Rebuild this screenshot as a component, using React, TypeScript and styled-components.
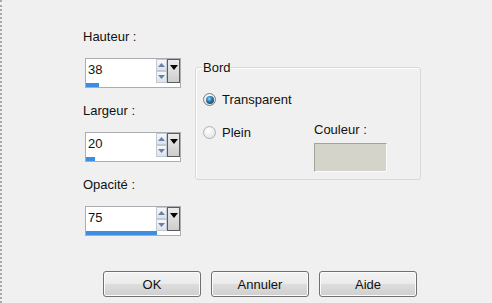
import React from "react";
import styled, { createGlobalStyle } from "styled-components";

const GlobalStyle = createGlobalStyle`
  html, body { margin: 0; padding: 0; background: #f0f0f0; }
  body { font-family: "Liberation Sans", Arial, sans-serif; font-size: 13px; color: #111; }
`;

const Page = styled.div`
  width: 492px;
  height: 303px;
  box-sizing: border-box;
  border-left: 2px dotted #a8a8a8;
  background: #f0f0f0;
  overflow: hidden;
`;

const Main = styled.div`
  display: flex;
  align-items: flex-start;
  padding: 29px 0 0 81px;
`;

const LeftColumn = styled.div`
  display: flex;
  flex-direction: column;
  width: 98px;
`;

const Field = styled.div`
  display: flex;
  flex-direction: column;
  & + & { margin-top: 15px; }
`;

const Label = styled.div`
  height: 15px;
  line-height: 15px;
  white-space: nowrap;
`;

const SpinBox = styled.div`
  margin: 14px 0 0 2px;
  width: 96px;
  height: 30px;
  box-sizing: border-box;
  border: 1px solid #abadb3;
  background: #fff;
  display: flex;
  flex-direction: column;
`;

const SpinTop = styled.div`
  display: flex;
  height: 24px;
`;

const Value = styled.div`
  flex: 1;
  padding: 3px 0 0 2px;
  line-height: 15px;
`;

const Steppers = styled.div`
  width: 11px;
  display: flex;
  flex-direction: column;
`;

const StepButton = styled.div`
  flex: 1;
  box-sizing: border-box;
  border: 1px solid #c3c9d3;
  background: linear-gradient(#f6f8fb, #dde3ec);
  display: flex;
  align-items: center;
  justify-content: center;
`;

const Dropdown = styled.div`
  width: 13px;
  box-sizing: border-box;
  border: 1px solid #5b5b5b;
  background: linear-gradient(#ececec, #cdcdcd);
  display: flex;
  justify-content: center;
  padding-top: 5px;
`;

const Track = styled.div`
  height: 4px;
  background: #fff;
`;

const Fill = styled.div`
  height: 4px;
  background: #3d8de0;
`;

const Group = styled.fieldset`
  margin: 31px 0 0 14px;
  width: 226px;
  min-width: 0;
  box-sizing: border-box;
  border: 1px solid #d5d9dd;
  border-radius: 3px;
  box-shadow: inset 1px 1px 0 #fff;
  padding: 0 0 7px 7px;
`;

const Legend = styled.legend`
  margin-left: -1px;
  padding: 0 1px;
  line-height: 15px;
`;

const Options = styled.div`
  display: flex;
  flex-direction: column;
  padding-top: 17px;
`;

const RadioRow = styled.div<{ $width?: number }>`
  display: flex;
  align-items: center;
  gap: 6px;
  height: 15px;
  line-height: 15px;
  width: ${(p) => (p.$width ? `${p.$width}px` : "auto")};
  flex: none;
`;

const RadioCircle = styled.span<{ $checked?: boolean }>`
  width: 13px;
  height: 13px;
  box-sizing: border-box;
  border-radius: 50%;
  border: 1px solid ${(p) => (p.$checked ? "#7d7d7d" : "#b2b2b2")};
  background: ${(p) =>
    p.$checked
      ? "radial-gradient(circle at 40% 35%, #ffffff, #d8d8d8)"
      : "radial-gradient(circle at 40% 35%, #ffffff, #dedede)"};
  display: flex;
  align-items: center;
  justify-content: center;
  flex: none;
`;

const RadioDot = styled.span`
  width: 8px;
  height: 8px;
  border-radius: 50%;
  background: radial-gradient(circle at 40% 35%, #8fdcff 0%, #2a78b0 40%, #0b3358 100%);
`;

const SecondRow = styled.div`
  display: flex;
  align-items: flex-start;
  margin-top: 18px;
`;

const ColorField = styled.div`
  display: flex;
  flex-direction: column;
  margin-top: -3px;
`;

const Swatch = styled.div`
  margin-top: 6px;
  width: 73px;
  height: 29px;
  box-sizing: border-box;
  background: #d4d4ca;
  border: 1px solid;
  border-color: #a3a39c #fbfbfb #fbfbfb #a3a39c;
`;

const ButtonRow = styled.div`
  display: flex;
  gap: 10px;
  margin-top: 35px;
  padding-left: 101px;
`;

const Button = styled.button`
  width: 98px;
  height: 26px;
  box-sizing: border-box;
  border: 1px solid #707070;
  border-radius: 3px;
  background: linear-gradient(#f2f2f2 0%, #ebebeb 50%, #dddddd 51%, #cfcfcf 100%);
  box-shadow: inset 0 0 0 1px #fcfcfc;
  font-family: "Liberation Sans", Arial, sans-serif;
  font-size: 13px;
  color: #111;
  padding: 0;
`;

const UpArrow = () => (
  <svg width="7" height="4" viewBox="0 0 7 4">
    <path d="M0 4 L3.5 0 L7 4 Z" fill="#6b7ea6" />
  </svg>
);

const DownArrow = () => (
  <svg width="7" height="4" viewBox="0 0 7 4">
    <path d="M0 0 L7 0 L3.5 4 Z" fill="#6b7ea6" />
  </svg>
);

const DropArrow = () => (
  <svg width="8" height="5" viewBox="0 0 8 5">
    <path d="M0 0 L8 0 L4 5 Z" fill="#000" />
  </svg>
);

type SpinProps = { label: string; value: string; bar: number };

const SpinField = ({ label, value, bar }: SpinProps) => (
  <Field>
    <Label>{label}</Label>
    <SpinBox>
      <SpinTop>
        <Value>{value}</Value>
        <Steppers>
          <StepButton>
            <UpArrow />
          </StepButton>
          <StepButton>
            <DownArrow />
          </StepButton>
        </Steppers>
        <Dropdown>
          <DropArrow />
        </Dropdown>
      </SpinTop>
      <Track>
        <Fill style={{ width: bar }} />
      </Track>
    </SpinBox>
  </Field>
);

export default function App() {
  return (
    <>
      <GlobalStyle />
      <Page>
        <Main>
          <LeftColumn>
            <SpinField label="Hauteur :" value="38" bar={13} />
            <SpinField label="Largeur :" value="20" bar={9} />
            <SpinField label="Opacité :" value="75" bar={71} />
          </LeftColumn>
          <Group>
            <Legend>Bord</Legend>
            <Options>
              <RadioRow>
                <RadioCircle $checked>
                  <RadioDot />
                </RadioCircle>
                Transparent
              </RadioRow>
              <SecondRow>
                <RadioRow $width={111}>
                  <RadioCircle />
                  Plein
                </RadioRow>
                <ColorField>
                  <Label>Couleur :</Label>
                  <Swatch />
                </ColorField>
              </SecondRow>
            </Options>
          </Group>
        </Main>
        <ButtonRow>
          <Button>OK</Button>
          <Button>Annuler</Button>
          <Button>Aide</Button>
        </ButtonRow>
      </Page>
    </>
  );
}
